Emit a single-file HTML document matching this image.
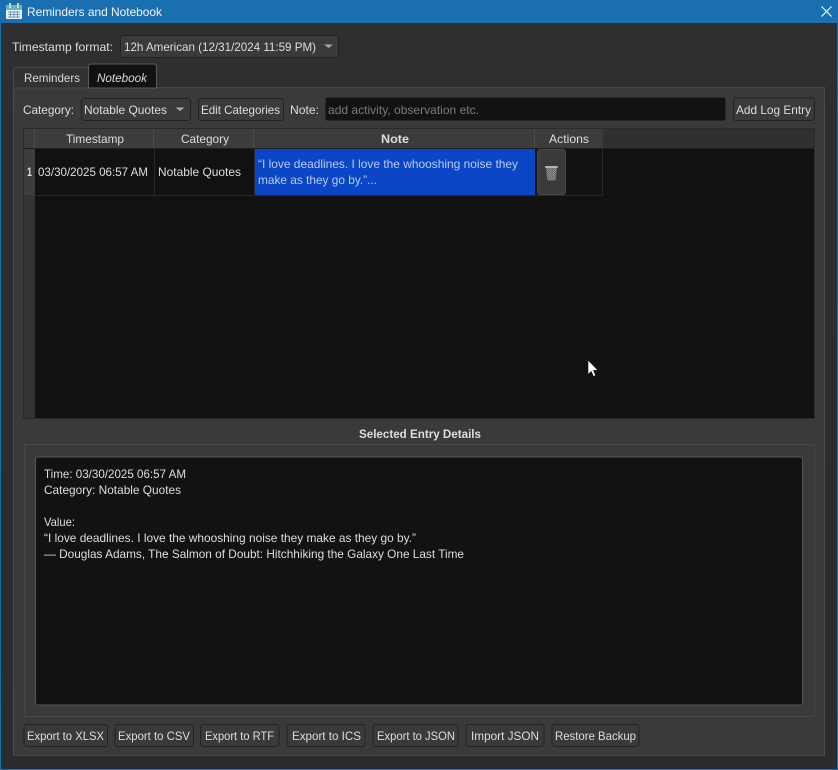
<!DOCTYPE html>
<html><head><meta charset="utf-8"><title>Reminders and Notebook</title>
<style>
html,body{margin:0;padding:0;background:#2e2e2e;width:838px;height:770px;overflow:hidden}
svg{display:block}
text{font-family:"Liberation Sans",sans-serif;font-size:12px;fill:#dedede}
.b{fill:#3a3a3a;stroke:#222;stroke-width:1}
.s{stroke:#4c4c4c;stroke-width:1}
</style></head><body>
<svg width="838" height="770" viewBox="0 0 838 770" xmlns="http://www.w3.org/2000/svg">
<defs>
<linearGradient id="bg" x1="0" y1="0" x2="0" y2="1"><stop offset="0" stop-color="#2f2f2f"/><stop offset="1" stop-color="#2b2b2b"/></linearGradient>
<pattern id="mesh" width="2" height="2" patternUnits="userSpaceOnUse"><rect width="2" height="2" fill="#8e8e8e"/><rect width="1" height="1" fill="#606060"/><rect x="1" y="1" width="1" height="1" fill="#6c6c6c"/></pattern>
</defs>
<rect width="838" height="770" fill="#1a6fb0"/>
<rect x="1" y="23" width="836" height="746" fill="url(#bg)"/>
<rect x="0" y="0" width="838" height="23" fill="#1a6fb0"/>

<!-- calendar icon -->
<rect x="6" y="6" width="16" height="13" rx="1" fill="#eef3f8"/>
<rect x="6" y="5" width="16" height="5" fill="#5db2e6"/>
<rect x="9" y="3" width="2" height="5" fill="#e8e24a"/>
<rect x="17" y="3" width="2" height="5" fill="#e8e24a"/>
<path d="M8 12h12M8 14.500h12M8 17h12M10.500 11v7M14 11v7M17.500 11v7" stroke="#6f97b8" stroke-width="1" fill="none"/>
<text x="27" y="16" textLength="135" lengthAdjust="spacingAndGlyphs" style="fill:#f2f6fa">Reminders and Notebook</text>
<path d="M821.500 6.500l10 10M831.500 6.500l-10 10" stroke="#fff" stroke-width="1.200" fill="none"/>

<text x="12" y="51" textLength="101" lengthAdjust="spacingAndGlyphs">Timestamp format:</text>
<rect x="120.500" y="35.500" width="218" height="22" rx="2.500" class="b"/>
<text x="124" y="51" textLength="192" lengthAdjust="spacingAndGlyphs">12h American (12/31/2024 11:59 PM)</text>
<path d="M324 44.500h9l-4.500 3.500z" fill="#a8a8a8"/>

<!-- pane -->
<rect x="13.500" y="87.500" width="811" height="668" fill="#3a3a3a" stroke="#4a4a4a"/>
<!-- tabs -->
<path d="M13.500 88V70.500q0-3 3-3H89V88z" fill="#323232" stroke="#474747"/>
<path d="M88.500 88V67q0-3 3-3h62q3 0 3 3V88z" fill="#111" stroke="#5a5a5a"/>
<text x="24" y="82" textLength="56" lengthAdjust="spacingAndGlyphs" style="fill:#d8d8d8">Reminders</text>
<text x="97" y="82" textLength="50" lengthAdjust="spacingAndGlyphs" font-style="italic" style="fill:#d8d8d8">Notebook</text>

<!-- toolbar -->
<text x="23" y="114" textLength="51" lengthAdjust="spacingAndGlyphs">Category:</text>
<rect x="81.500" y="98.500" width="109" height="22" rx="2.500" class="b"/>
<text x="84" y="114" textLength="83" lengthAdjust="spacingAndGlyphs">Notable Quotes</text>
<path d="M175.500 107.500h9l-4.500 3.500z" fill="#a8a8a8"/>
<rect x="198.500" y="98.500" width="85" height="22" rx="2.500" class="b"/>
<text x="201" y="114" textLength="79" lengthAdjust="spacingAndGlyphs">Edit Categories</text>
<text x="290" y="114" textLength="29" lengthAdjust="spacingAndGlyphs">Note:</text>
<rect x="325.500" y="97.500" width="400" height="23" rx="2.500" fill="#121212" stroke="#262626"/>
<text x="328" y="114" textLength="151" lengthAdjust="spacingAndGlyphs" style="fill:#7c7c7c">add activity, observation etc.</text>
<rect x="733.500" y="98" width="81" height="22.500" rx="2.500" class="b"/>
<text x="736" y="114" textLength="75" lengthAdjust="spacingAndGlyphs">Add Log Entry</text>

<!-- table -->
<rect x="23.500" y="128.500" width="791" height="290" fill="#111" stroke="#2a2a2a"/>
<rect x="24" y="129" width="790" height="19" fill="#303030"/>
<rect x="24" y="129" width="579" height="19" fill="#3c3c3c"/>
<rect x="24" y="148" width="11" height="270" fill="#333"/>
<rect x="24" y="149" width="11" height="46" fill="#3d3d3d"/>
<path d="M34.500 129v19M153.500 129v19M253.500 129v19M534.500 129v19" class="s"/>
<path d="M24 148.500h790" stroke="#1e1e1e"/>
<text x="66" y="143" textLength="58" lengthAdjust="spacingAndGlyphs">Timestamp</text>
<text x="181" y="143" textLength="48" lengthAdjust="spacingAndGlyphs">Category</text>
<text x="381" y="143" textLength="28" lengthAdjust="spacingAndGlyphs" font-weight="bold">Note</text>
<text x="549" y="143" textLength="40" lengthAdjust="spacingAndGlyphs">Actions</text>
<rect x="255" y="149" width="280" height="46" fill="#0b46c6"/>
<path d="M35 195.500h568M154.500 149v46M254.500 149v46M602.500 149v46" stroke="#272727" fill="none"/>
<text x="27" y="176" textLength="5" lengthAdjust="spacingAndGlyphs" font-weight="bold">1</text>
<text x="38" y="176" textLength="110" lengthAdjust="spacingAndGlyphs">03/30/2025 06:57 AM</text>
<text x="158" y="176" textLength="83" lengthAdjust="spacingAndGlyphs">Notable Quotes</text>
<text x="258" y="168" textLength="260" lengthAdjust="spacingAndGlyphs" style="fill:#b9cbf0">“I love deadlines. I love the whooshing noise they</text>
<text x="258" y="184" textLength="119" lengthAdjust="spacingAndGlyphs" style="fill:#b9cbf0">make as they go by.”...</text>
<rect x="537.500" y="149.500" width="28" height="45" rx="2.500" fill="#3a3a3a" stroke="#4a4a4a"/>
<path d="M546 168h11l-1.300 11q-.2 1.500-1.500 1.500h-5.400q-1.300 0-1.500-1.500z" fill="url(#mesh)"/>
<rect x="545" y="166" width="13" height="2" rx="1" fill="#b4b4b4"/>

<!-- details group -->
<text x="359" y="438" textLength="122" lengthAdjust="spacingAndGlyphs" font-weight="bold">Selected Entry Details</text>
<rect x="24.500" y="444.500" width="790" height="272" fill="#3a3a3a" stroke="#464646"/>
<rect x="35.500" y="457" width="767" height="248" rx="2.500" fill="#121212" stroke="#555"/>
<text x="44" y="478" textLength="142" lengthAdjust="spacingAndGlyphs">Time: 03/30/2025 06:57 AM</text>
<text x="44" y="494" textLength="137" lengthAdjust="spacingAndGlyphs">Category: Notable Quotes</text>
<text x="44" y="526" textLength="31" lengthAdjust="spacingAndGlyphs">Value:</text>
<text x="44" y="542" textLength="372" lengthAdjust="spacingAndGlyphs">“I love deadlines. I love the whooshing noise they make as they go by.”</text>
<text x="44" y="558" textLength="420" lengthAdjust="spacingAndGlyphs">— Douglas Adams, The Salmon of Doubt: Hitchhiking the Galaxy One Last Time</text>

<!-- bottom buttons -->
<rect x="24" y="724.500" width="83.500" height="22" rx="2.500" class="b"/>
<rect x="115" y="724.500" width="78.500" height="22" rx="2.500" class="b"/>
<rect x="200.500" y="724.500" width="78.500" height="22" rx="2.500" class="b"/>
<rect x="287" y="724.500" width="78" height="22" rx="2.500" class="b"/>
<rect x="373" y="724.500" width="85" height="22" rx="2.500" class="b"/>
<rect x="466" y="724.500" width="78" height="22" rx="2.500" class="b"/>
<rect x="552" y="724.500" width="87" height="22" rx="2.500" class="b"/>
<text x="27" y="740" textLength="77" lengthAdjust="spacingAndGlyphs">Export to XLSX</text>
<text x="118" y="740" textLength="72" lengthAdjust="spacingAndGlyphs">Export to CSV</text>
<text x="205" y="740" textLength="69" lengthAdjust="spacingAndGlyphs">Export to RTF</text>
<text x="292" y="740" textLength="69" lengthAdjust="spacingAndGlyphs">Export to ICS</text>
<text x="377" y="740" textLength="78" lengthAdjust="spacingAndGlyphs">Export to JSON</text>
<text x="471" y="740" textLength="68" lengthAdjust="spacingAndGlyphs">Import JSON</text>
<text x="555" y="740" textLength="81" lengthAdjust="spacingAndGlyphs">Restore Backup</text>

<!-- cursor -->
<path d="M588 360v14.500l3.300-3 2.200 5 2.200-1-2.200-5 4.300-.3z" fill="#fff" stroke="#111" stroke-width=".6"/>
</svg>
</body></html>
